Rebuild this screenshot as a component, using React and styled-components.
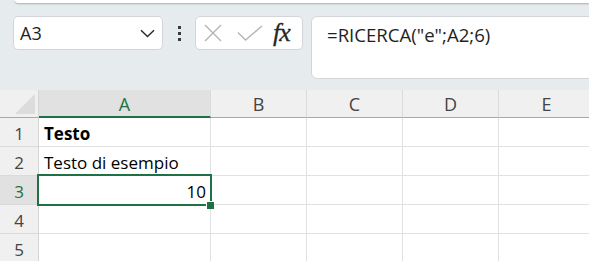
import styled, { createGlobalStyle } from "styled-components"

const GlobalStyle = createGlobalStyle`
  html, body {
    margin: 0;
    padding: 0;
    background: #ffffff;
  }
  body {
    font-family: "Open Sans", "Noto Sans", sans-serif;
  }
`

const columns = ["A", "B", "C", "D", "E"]
const widths = [172, 96, 96, 96, 96]

const rows = [
  { n: 1, a: "Testo", bold: true },
  { n: 2, a: "Testo di esempio" },
  { n: 3, a: "10", right: true, selected: true },
  { n: 4 },
  { n: 5 },
]

export default function App() {
  return (
    <>
      <GlobalStyle />
      <Page>
        <Top>
          <Lip />
          <FormulaRow>
            <NameBox>
              <span>A3</span>
              <svg width="15" height="9" viewBox="0 0 15 9">
                <path d="M1 1.2 L7.5 7.5 L14 1.2" fill="none" stroke="#2b2b2b" strokeWidth="1.5" />
              </svg>
            </NameBox>
            <Dots>
              <i />
              <i />
              <i />
            </Dots>
            <ButtonBox>
              <svg width="18" height="18" viewBox="0 0 18 18">
                <path d="M1 1 L17 17 M17 1 L1 17" stroke="#b4b4b4" strokeWidth="1.4" />
              </svg>
              <svg width="26" height="16" viewBox="0 0 26 16">
                <path d="M1 7.5 L8.5 15 L25 1" fill="none" stroke="#b4b4b4" strokeWidth="1.4" />
              </svg>
              <Fx>fx</Fx>
            </ButtonBox>
            <FormulaInput>=RICERCA("e";A2;6)</FormulaInput>
          </FormulaRow>
        </Top>
        <Sheet>
          <Corner />
          {columns.map((c, i) => (
            <ColHead key={c} $active={c === "A"} style={{ width: widths[i] }}>
              {c}
            </ColHead>
          ))}
          {rows.map((r) => (
            <Row key={r.n}>
              <RowHead $active={r.selected}>{r.n}</RowHead>
              <Cell $bold={r.bold} $right={r.right} $selected={r.selected}>
                {r.a}
              </Cell>
              <Cell />
              <Cell />
              <Cell />
              <Cell />
            </Row>
          ))}
        </Sheet>
      </Page>
    </>
  )
}

const Page = styled.div`
  width: 589px;
  height: 261px;
  overflow: hidden;
  display: flex;
  flex-direction: column;
`

const Top = styled.div`
  background: #e6ebee;
  height: 90px;
  display: flex;
  flex-direction: column;
  flex-shrink: 0;
`

const Lip = styled.div`
  height: 3px;
  margin-left: 15px;
  background: #ffffff;
  border-bottom-left-radius: 8px;
  box-shadow: 0 1px 2px rgba(0, 0, 0, 0.25);
`

const FormulaRow = styled.div`
  display: flex;
  align-items: flex-start;
  margin-top: 13px;
  padding-left: 13px;
`

const NameBox = styled.div`
  box-sizing: border-box;
  width: 150px;
  height: 34px;
  background: #ffffff;
  border: 1px solid #d3d6d8;
  border-radius: 5px;
  display: flex;
  align-items: center;
  justify-content: space-between;
  padding: 0 7px 0 6px;
  font-size: 18px;
  color: #1f1f1f;
`

const Dots = styled.div`
  width: 32px;
  height: 34px;
  display: flex;
  flex-direction: column;
  align-items: center;
  justify-content: center;
  gap: 3px;
  i {
    display: block;
    width: 3px;
    height: 3px;
    background: #3a3a3a;
  }
`

const ButtonBox = styled.div`
  box-sizing: border-box;
  width: 108px;
  height: 34px;
  background: #ffffff;
  border: 1px solid #d3d6d8;
  border-radius: 5px;
  display: flex;
  align-items: center;
  padding-left: 8px;
  gap: 15px;
`

const Fx = styled.span`
  font-family: "Liberation Serif", "DejaVu Serif", serif;
  font-style: italic;
  font-size: 26px;
  line-height: 1;
  color: #262626;
  margin-left: -5px;
  letter-spacing: -1px;
  -webkit-text-stroke: 0.3px #262626;
`

const FormulaInput = styled.div`
  box-sizing: border-box;
  flex: 1;
  margin-left: 8px;
  margin-right: -20px;
  height: 63px;
  background: #ffffff;
  border: 1px solid #d3d6d8;
  border-radius: 6px;
  padding: 5px 0 0 15px;
  font-size: 18.6px;
  color: #1f1f1f;
`

const Sheet = styled.div`
  display: grid;
  grid-template-columns: 39px 172px repeat(4, 96px);
  grid-auto-rows: 29px;
  grid-template-rows: 28px;
  background: #ffffff;
`

const Corner = styled.div`
  background: #f0f0f0;
  border-right: 1px solid #d4d4d4;
  border-bottom: 1px solid #a8a8a8;
  box-sizing: border-box;
  position: relative;
  &::after {
    content: "";
    position: absolute;
    right: 3px;
    bottom: 3px;
    width: 0;
    height: 0;
    border-left: 20px solid transparent;
    border-bottom: 20px solid #dcdcdc;
  }
`

const ColHead = styled.div`
  box-sizing: border-box;
  background: ${(p) => (p.$active ? "#e1e1e1" : "#f0f0f0")};
  color: ${(p) => (p.$active ? "#1e7145" : "#444444")};
  border-right: 1px solid #dadada;
  border-bottom: ${(p) => (p.$active ? "2px solid #1e7145" : "1px solid #a8a8a8")};
  display: flex;
  align-items: center;
  justify-content: center;
  font-size: 18px;
  padding-top: ${(p) => (p.$active ? "1px" : "0")};
`

const Row = styled.div`
  display: contents;
`

const RowHead = styled.div`
  box-sizing: border-box;
  background: ${(p) => (p.$active ? "#e1e1e1" : "#f0f0f0")};
  color: ${(p) => (p.$active ? "#1e7145" : "#444444")};
  border-right: 1px solid #d4d4d4;
  border-bottom: 1px solid #dadada;
  display: flex;
  align-items: center;
  justify-content: center;
  font-size: 17px;
  padding-top: 2px;
`

const Cell = styled.div`
  box-sizing: border-box;
  position: relative;
  border-right: 1px solid #e1e1e1;
  border-bottom: 1px solid #e1e1e1;
  display: flex;
  align-items: center;
  justify-content: ${(p) => (p.$right ? "flex-end" : "flex-start")};
  padding: 2px 4px 0 5px;
  font-size: 17px;
  font-weight: ${(p) => (p.$bold ? 700 : 400)};
  color: #000000;
  white-space: nowrap;
  ${(p) =>
    p.$selected &&
    `
    &::after {
      content: "";
      position: absolute;
      left: -2px;
      top: -2px;
      right: -2px;
      bottom: -2px;
      border: 2px solid #1e7145;
      pointer-events: none;
    }
    &::before {
      content: "";
      position: absolute;
      right: -4px;
      bottom: -5px;
      width: 7px;
      height: 7px;
      background: #1e7145;
      border-left: 1px solid #fff;
      border-top: 1px solid #fff;
      z-index: 2;
    }
  `}
`
